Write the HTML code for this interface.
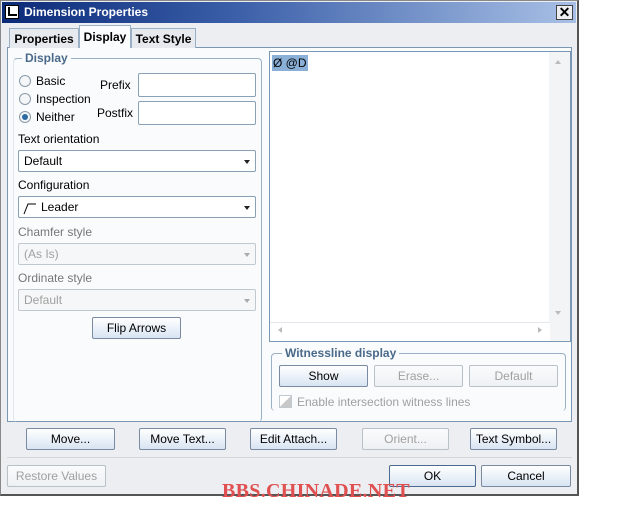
<!DOCTYPE html>
<html><head><style>
*{box-sizing:border-box}
body{margin:0;width:640px;height:512px;background:#fff;font-family:"Liberation Sans",sans-serif;font-size:12px;position:relative;overflow:hidden;color:#000}
.a{position:absolute}
.dlg{left:0;top:0;width:579px;height:496px;background:#eceef1;border:1px solid #888;border-right:2px solid #555;border-bottom:2px solid #555}
.title{left:2px;top:2px;width:574px;height:21px;background:linear-gradient(90deg,#0b2a78,#3a5ea8 40%,#a8c0e6);color:#fff;font-weight:bold;font-size:12px;line-height:21px;padding-left:22px}
.btn{position:absolute;height:22px;border:1px solid #7a8aa0;border-radius:2px;background:linear-gradient(#fff,#d8e4f2);text-align:center;line-height:20px;font-size:12px}
.dis{color:#a0a0a0;border-color:#b8c0c8;background:linear-gradient(#fafbfc,#eef1f4)}
.field{position:absolute;background:#fff;border:1px solid #8aa0b4;border-radius:2px}
.combo{position:absolute;height:22px;background:#fff;border:1px solid #8aa0b4;border-radius:2px;padding-left:5px;line-height:20px}
.combo:after{content:"";position:absolute;right:5px;top:9px;border:3.5px solid transparent;border-top:4px solid #222}
.combo.d{background:#f6f7f8;color:#a0a0a0;border-color:#c0c8d0}
.combo.d:after{border-top-color:#aaa}
.lbl{position:absolute;font-size:12px}
.grp{position:absolute;border:1px solid #9ab0c4;border-radius:4px}
.gt{position:absolute;background:#fafbfc;color:#4a6a8a;font-weight:bold;padding:0 3px}
.radio{position:absolute;width:12px;height:12px;border-radius:50%;border:1px solid #8a9aaa;background:#f4f6f8}
</style></head><body>
<div class="a dlg"></div>
<div class="a title">Dimension Properties</div>
<div class="a" style="left:5px;top:5px;width:14px;height:14px;background:#fff;border:1px solid #000"><div class="a" style="left:2px;top:1px;width:2px;height:9px;background:#000"></div><div class="a" style="left:2px;top:8px;width:9px;height:2px;background:#000"></div></div>
<div class="a" style="left:556px;top:5px;width:17px;height:15px;background:#eceef1;border:1px solid #444;font-size:14px;line-height:12px;text-align:center;font-weight:bold">✕</div>
<!-- tabs -->
<div class="a" style="left:7px;top:47px;width:565px;height:375px;border:1px solid #7a98b4;background:#fafbfc"></div>
<div class="a" style="left:9px;top:28px;width:70px;height:20px;border:1px solid #9ab0c4;border-bottom:none;background:#e6eaee;font-weight:bold;line-height:20px;text-align:center">Properties</div>
<div class="a" style="left:79px;top:25px;width:52px;height:23px;border:1px solid #9ab0c4;border-bottom:none;background:#fafbfc;font-weight:bold;line-height:22px;text-align:center;z-index:2">Display</div>
<div class="a" style="left:131px;top:28px;width:65px;height:20px;border:1px solid #9ab0c4;border-bottom:none;background:#e6eaee;font-weight:bold;line-height:20px;text-align:center">Text Style</div>
<!-- left group -->
<div class="grp" style="left:13px;top:58px;width:249px;height:364px;border-bottom:none;border-left-color:#e0e6ec"></div>
<div class="gt" style="left:22px;top:51px">Display</div>
<div class="radio" style="left:19px;top:75px"></div><div class="lbl" style="left:36px;top:74px">Basic</div>
<div class="radio" style="left:19px;top:93px"></div><div class="lbl" style="left:36px;top:92px">Inspection</div>
<div class="radio" style="left:19px;top:111px"><div class="a" style="left:2px;top:2px;width:6px;height:6px;border-radius:50%;background:#2a6aa0"></div></div><div class="lbl" style="left:36px;top:110px">Neither</div>
<div class="lbl" style="left:100px;top:78px">Prefix</div>
<div class="lbl" style="left:97px;top:106px">Postfix</div>
<div class="field" style="left:138px;top:73px;width:118px;height:24px"></div>
<div class="field" style="left:138px;top:101px;width:118px;height:24px"></div>
<div class="lbl" style="left:18px;top:132px">Text orientation</div>
<div class="combo" style="left:18px;top:150px;width:238px">Default</div>
<div class="lbl" style="left:18px;top:178px">Configuration</div>
<div class="combo" style="left:18px;top:196px;width:238px"><svg width="14" height="14" style="position:absolute;left:4px;top:4px"><path d="M1 13 L5 3 L13 3" stroke="#000" fill="none"/></svg><span style="margin-left:17px">Leader</span></div>
<div class="lbl" style="left:18px;top:225px;color:#777">Chamfer style</div>
<div class="combo d" style="left:18px;top:243px;width:238px">(As Is)</div>
<div class="lbl" style="left:18px;top:271px;color:#777">Ordinate style</div>
<div class="combo d" style="left:18px;top:289px;width:238px">Default</div>
<div class="btn" style="left:92px;top:317px;width:89px">Flip Arrows</div>
<!-- text area -->
<div class="a" style="left:269px;top:51px;width:302px;height:291px;border:1px solid #7a98b4;background:#fff"></div>
<div class="a" style="left:549px;top:52px;width:21px;height:289px;background:#f3f4f6"></div>
<div class="a" style="left:270px;top:322px;width:280px;height:19px;background:#fff;border-top:1px solid #e4e8ec"></div>
<div class="a" style="left:555px;top:57px;border:3.5px solid transparent;border-bottom:4px solid #bbb"></div>
<div class="a" style="left:555px;top:311px;border:3.5px solid transparent;border-top:4px solid #bbb"></div>
<div class="a" style="left:275px;top:327px;border:3.5px solid transparent;border-right:4px solid #bbb"></div>
<div class="a" style="left:538px;top:327px;border:3.5px solid transparent;border-left:4px solid #bbb"></div>
<div class="a" style="left:272px;top:55px;width:36px;height:16px;background:#8ab0d8;line-height:16px;padding-left:1px">Ø @D</div>
<!-- witness -->
<div class="grp" style="left:271px;top:353px;width:295px;height:58px;border-bottom:none"></div>
<div class="gt" style="left:282px;top:346px">Witnessline display</div>
<div class="btn" style="left:279px;top:365px;width:89px">Show</div>
<div class="btn dis" style="left:374px;top:365px;width:89px">Erase...</div>
<div class="btn dis" style="left:469px;top:365px;width:89px">Default</div>
<div class="a" style="left:279px;top:395px;width:13px;height:13px;border:1px solid #c0c8d0;background:linear-gradient(135deg,#fff 50%,#c8c8c8 50%)"></div>
<div class="lbl" style="left:297px;top:395px;color:#a0a0a0">Enable intersection witness lines</div>
<!-- bottom -->
<div class="btn" style="left:26px;top:428px;width:89px">Move...</div>
<div class="btn" style="left:139px;top:428px;width:87px">Move Text...</div>
<div class="btn" style="left:250px;top:428px;width:87px">Edit Attach...</div>
<div class="btn dis" style="left:362px;top:428px;width:87px">Orient...</div>
<div class="btn" style="left:470px;top:428px;width:87px">Text Symbol...</div>
<div class="a" style="left:7px;top:457px;width:565px;height:1px;background:#d0d6dc"></div>
<div class="btn dis" style="left:7px;top:465px;width:99px">Restore Values</div>
<div class="btn" style="left:389px;top:465px;width:87px;border-color:#4a6a90">OK</div>
<div class="btn" style="left:481px;top:465px;width:90px">Cancel</div>
<div class="a" style="left:222px;top:480px;font-family:'Liberation Serif',serif;font-weight:bold;font-size:20px;color:#e05050;letter-spacing:0.3px">BBS.CHINADE.NET</div>
</body></html>
